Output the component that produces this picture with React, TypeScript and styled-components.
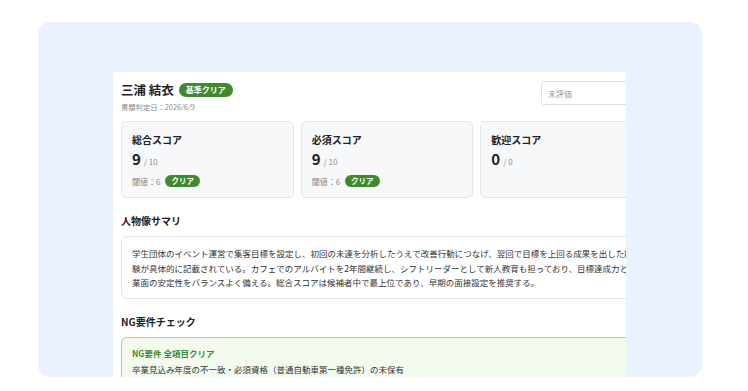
import styled, { createGlobalStyle } from "styled-components";

const GlobalStyle = createGlobalStyle`
  html, body {
    margin: 0;
    padding: 0;
    background: #ffffff;
  }
  body {
    font-family: "Noto Sans CJK JP", "Noto Sans", sans-serif;
    color: #222;
  }
`;

type Score = {
  key: string;
  label: string;
  value: number;
  max: number;
  threshold?: number;
};

const scores: Score[] = [
  { key: "total", label: "総合スコア", value: 9, max: 10, threshold: 6 },
  { key: "must", label: "必須スコア", value: 9, max: 10, threshold: 6 },
  { key: "want", label: "歓迎スコア", value: 0, max: 0 },
];

const summaryLines = [
  "学生団体のイベント運営で集客目標を設定し、初回の未達を分析したうえで改善行動につなげ、翌回で目標を上回る成果を出した経",
  "験が具体的に記載されている。カフェでのアルバイトを2年間継続し、シフトリーダーとして新人教育も担っており、目標達成力と学",
  "業面の安定性をバランスよく備える。総合スコアは候補者中で最上位であり、早期の面接設定を推奨する。",
];

const App = () => {
  return (
    <>
      <GlobalStyle />
      <Stage>
        <Panel>
          <Viewport>
            <Page>
              <Header>
                <div>
                  <NameRow>
                    <Name>三浦 結衣</Name>
                    <Pill $size="lg">基準クリア</Pill>
                  </NameRow>
                  <DateText>書類判定日：2026/6/9</DateText>
                </div>
                <Select>未評価</Select>
              </Header>

              <ScoreGrid>
                {scores.map((s) => (
                  <ScoreCard key={s.key}>
                    <ScoreLabel>{s.label}</ScoreLabel>
                    <ScoreValue>
                      {s.value}
                      <ScoreMax>/ {s.max}</ScoreMax>
                    </ScoreValue>
                    {s.threshold !== undefined && (
                      <ThresholdRow>
                        閾値：{s.threshold}
                        <Pill $size="sm">クリア</Pill>
                      </ThresholdRow>
                    )}
                  </ScoreCard>
                ))}
              </ScoreGrid>

              <SectionTitle>人物像サマリ</SectionTitle>
              <SummaryBox>
                {summaryLines.map((line, i) => (
                  <SummaryLine key={i}>{line}</SummaryLine>
                ))}
              </SummaryBox>

              <SectionTitle>NG要件チェック</SectionTitle>
              <NgBox>
                <NgTitle>NG要件 全項目クリア</NgTitle>
                <NgText>
                  卒業見込み年度の不一致・必須資格（普通自動車第一種免許）の未保有
                </NgText>
              </NgBox>
            </Page>
          </Viewport>
        </Panel>
      </Stage>
    </>
  );
};

const Stage = styled.div`
  box-sizing: border-box;
  height: 391px;
  width: 748px;
  padding: 22px 46px 14px 38px;
  display: flex;
`;

const Panel = styled.div`
  flex: 1;
  display: flex;
  background: #eaf3fd;
  border-radius: 12px;
  overflow: hidden;
  padding: 50px 76px 0 75px;
`;

const Viewport = styled.div`
  flex: 1;
  background: #ffffff;
  overflow: hidden;
`;

const Page = styled.div`
  width: 532px;
  padding: 9px 9px 0 8px;
`;

const Header = styled.div`
  display: flex;
  justify-content: space-between;
  align-items: flex-start;
`;

const NameRow = styled.div`
  display: flex;
  align-items: center;
  gap: 5px;
  margin-top: 2px;
  height: 14px;
`;

const Name = styled.span`
  font-size: 12.5px;
  font-weight: 700;
  color: #1f1f1f;
  line-height: 14px;
`;

const Pill = styled.span<{ $size: "lg" | "sm" }>`
  display: inline-flex;
  align-items: center;
  justify-content: center;
  background: #3f8a2e;
  color: #ffffff;
  font-weight: 700;
  border-radius: 8px;
  height: ${(p) => (p.$size === "lg" ? "14px" : "12px")};
  font-size: ${(p) => (p.$size === "lg" ? "8px" : "7.5px")};
  padding: ${(p) => (p.$size === "lg" ? "0 7px" : "0 6px")};
  line-height: 1;
`;

const DateText = styled.div`
  margin-top: 5px;
  font-size: 7.3px;
  line-height: 10px;
  color: #8a8a8a;
`;

const Select = styled.div`
  box-sizing: border-box;
  width: 112px;
  height: 24px;
  border: 1px solid #dcdfe3;
  border-radius: 3px;
  padding-left: 6px;
  display: flex;
  align-items: center;
  font-size: 8px;
  color: #9a9a9a;
`;

const ScoreGrid = styled.div`
  display: grid;
  grid-template-columns: repeat(3, 1fr);
  gap: 7px;
  margin-top: 9px;
`;

const ScoreCard = styled.div`
  box-sizing: border-box;
  height: 77px;
  background: #f7f8fa;
  border: 1px solid #e3e5e8;
  border-radius: 5px;
  padding: 11px 10px 0 10px;
`;

const ScoreLabel = styled.div`
  font-size: 10px;
  font-weight: 700;
  line-height: 13px;
  color: #222;
`;

const ScoreValue = styled.div`
  margin-top: 4px;
  font-size: 15px;
  font-weight: 700;
  line-height: 17px;
  color: #1f1f1f;
  display: flex;
  align-items: baseline;
`;

const ScoreMax = styled.span`
  font-size: 8px;
  font-weight: 400;
  color: #8a8a8a;
  margin-left: 3px;
`;

const ThresholdRow = styled.div`
  margin-top: 5px;
  display: flex;
  align-items: center;
  gap: 5px;
  font-size: 8px;
  color: #8a8a8a;
  height: 12px;
`;

const SectionTitle = styled.div`
  margin: 16px 0 8px;
  font-size: 10px;
  font-weight: 700;
  line-height: 14px;
  color: #222;
`;

const SummaryBox = styled.div`
  border: 1px solid #e3e5e8;
  border-radius: 6px;
  padding: 9px 10px 8px;
  background: #ffffff;
`;

const SummaryLine = styled.div`
  font-size: 8.5px;
  line-height: 14.5px;
  color: #333;
  white-space: nowrap;
`;

const NgBox = styled.div`
  border: 1px solid #a9cd9a;
  border-radius: 6px;
  background: #f3fbef;
  padding: 8px 10px 10px;
`;

const NgTitle = styled.div`
  font-size: 8.5px;
  font-weight: 700;
  line-height: 14px;
  color: #3f8a2e;
`;

const NgText = styled.div`
  margin-top: 2px;
  font-size: 8.5px;
  line-height: 14px;
  color: #333;
`;

export default App;
